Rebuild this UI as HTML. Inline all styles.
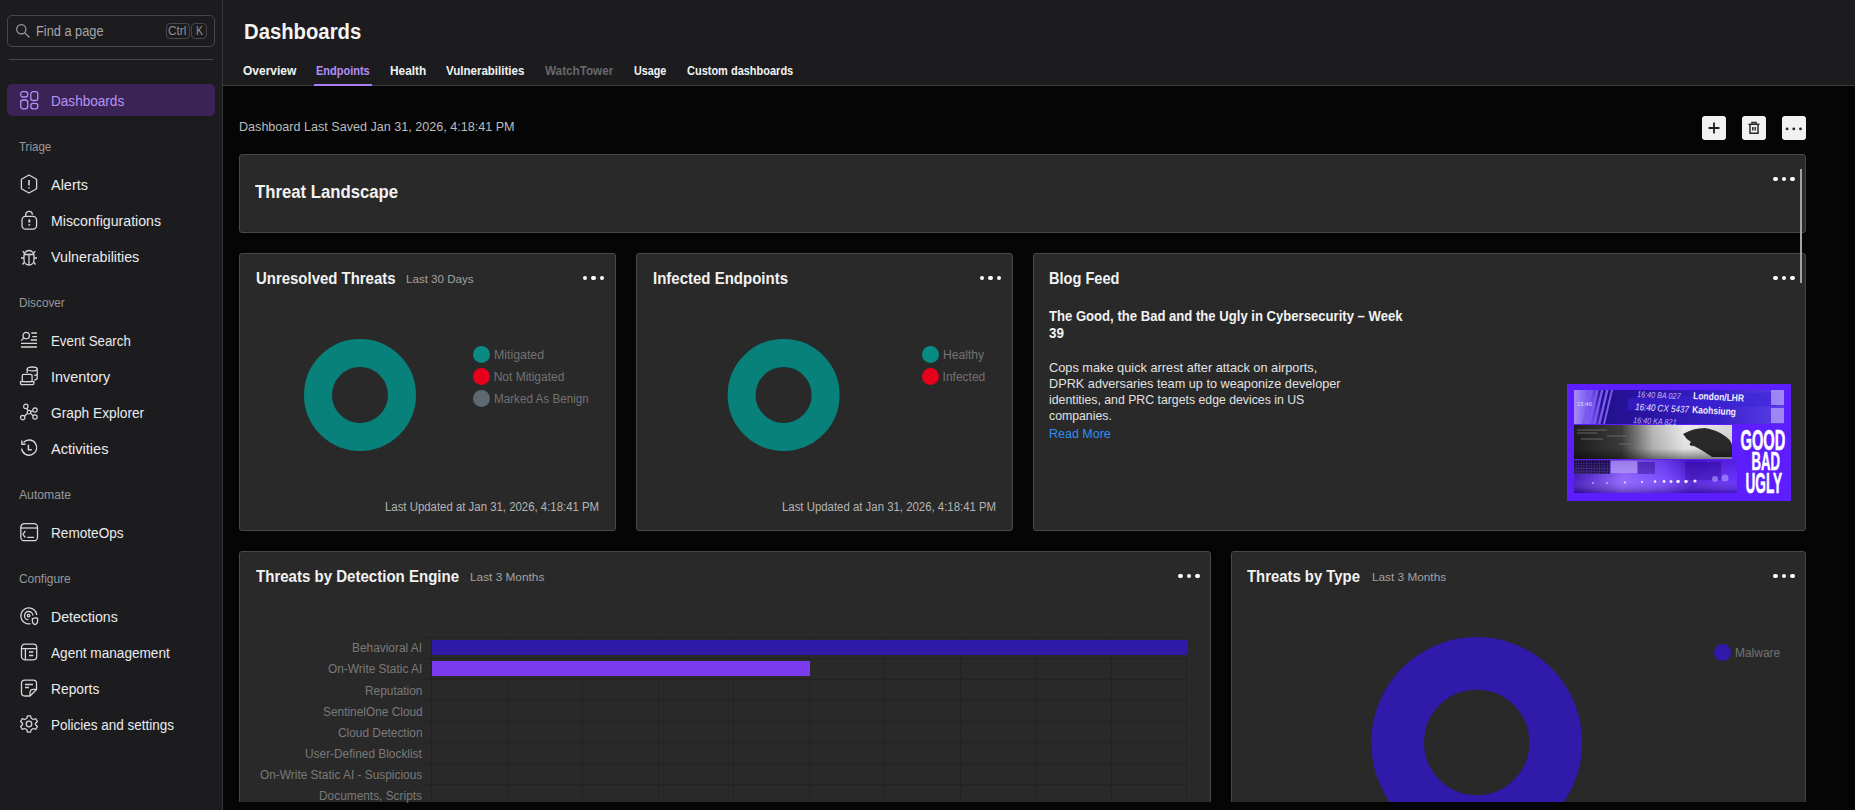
<!DOCTYPE html>
<html><head><meta charset="utf-8">
<style>
*{box-sizing:border-box;margin:0;padding:0}
html,body{width:1855px;height:810px;overflow:hidden;background:#050505;font-family:"Liberation Sans",sans-serif;color:#eee}
.abs{position:absolute}
#side{position:absolute;left:0;top:0;width:223px;height:810px;background:#1c1c1f;border-right:1px solid #363639}
#hdr{position:absolute;left:223px;top:0;width:1632px;height:86px;background:#1c1c1f;border-bottom:1px solid #3c3c3f}
.t{position:absolute;white-space:pre;line-height:1;transform-origin:0 0}
.card{position:absolute;background:#292929;border:1px solid #484848;border-radius:3px;overflow:hidden}
.dots{position:absolute;width:22px;height:5px}
.dots i{position:absolute;top:0;width:4.3px;height:4.3px;border-radius:50%;background:#fff}
.dots i:nth-child(1){left:0}.dots i:nth-child(2){left:8.45px}.dots i:nth-child(3){left:16.9px}
.ico{position:absolute;left:19px;width:20px;height:20px}
.ldot{position:absolute;width:17px;height:17px;border-radius:50%}
.btn{position:absolute;top:116px;width:24px;height:24px;background:#f1f1f1;border-radius:3px}
</style></head><body>
<div id="side">
  <div class="abs" style="left:7px;top:15px;width:208px;height:32px;border:1px solid #47474a;border-radius:5px"></div>
  <svg class="abs" style="left:14px;top:22px" width="20" height="20" viewBox="0 0 20 20"><circle cx="7.3" cy="7.3" r="4.6" fill="none" stroke="#a2a1a6" stroke-width="1.2"/><path d="M10.6 10.6 L15 15" stroke="#a2a1a6" stroke-width="1.2" stroke-linecap="round"/></svg>
  <div class="abs" style="left:166px;top:23px;width:24px;height:16px;border:1px solid #48474b;border-radius:4px"></div>
  <div class="abs" style="left:191px;top:23px;width:16px;height:16px;border:1px solid #48474b;border-radius:4px"></div>
  <div class="abs" style="left:9px;top:59px;width:204px;height:1px;background:#48484b"></div>

  <div class="abs" style="left:7px;top:84px;width:208px;height:32px;background:#3a2456;border-radius:5px"></div>
  <svg class="abs" style="left:19px;top:90px" width="20" height="20" viewBox="0 0 20 20" fill="none" stroke="#b48ff7" stroke-width="1.3"><rect x="1.7" y="1.7" width="7" height="5.3" rx="2.2"/><rect x="11.8" y="1.7" width="7" height="8.8" rx="2.2"/><rect x="1.7" y="10" width="7" height="8.8" rx="2.2"/><rect x="11.8" y="13.4" width="7" height="5.4" rx="2.2"/></svg>
  <svg class="ico" style="top:174px" viewBox="0 0 20 20" fill="none" stroke="#d6d6d8" stroke-width="1.3"><path d="M10 1 L17.6 5.3 V14.7 L10 19 L2.4 14.7 V5.3 Z" stroke-linejoin="round"/><path d="M10 6 V11.4 M10 13.3 V14.6" stroke-width="1.6"/></svg>

  <svg class="ico" style="top:210px" viewBox="0 0 20 20" fill="none" stroke="#d6d6d8" stroke-width="1.3"><rect x="3" y="6.4" width="14.6" height="12.8" rx="3.6"/><path d="M6.7 6.4 V4.8 A3.4 3.4 0 0 1 13.4 4 L13.6 4.6"/><path d="M10.3 9.4 V12.6" stroke-width="1.9"/><path d="M10.3 14.2 V15.6" stroke-width="1.9"/></svg>

  <svg class="ico" style="top:247px" viewBox="0 0 20 20" fill="none" stroke="#d6d6d8" stroke-width="1.3"><path d="M10 3.5 C6.4 3.5 5 6.5 5 9 V13 C5 16 7.2 18 10 18 C12.8 18 15 16 15 13 V9 C15 6.5 13.6 3.5 10 3.5 Z"/><path d="M5.2 7.5 H14.8 M10 7.5 V17.6"/><path d="M2 11 H5 M15 11 H18 M3.8 4 L5.6 6.6 M16.2 4 L14.4 6.6 M3.5 17.5 L5.6 15 M16.5 17.5 L14.4 15"/></svg>
  <svg class="ico" style="top:330px" viewBox="0 0 20 20" fill="none" stroke="#d6d6d8" stroke-width="1.3"><circle cx="7.2" cy="5.6" r="3.2"/><path d="M4.9 7.9 L2.2 10.6"/><path d="M12.3 3 H18 M13.3 6.6 H18 M11.8 10 H18 M2 13.4 H18 M2 17 H18" stroke-width="1.4"/></svg>

  <svg class="ico" style="top:366px" viewBox="0 0 20 20" fill="none" stroke="#d6d6d8" stroke-width="1.3"><ellipse cx="13.2" cy="2.9" rx="5" ry="1.9"/><path d="M8.2 2.9 V7 M18.2 2.9 V12 C18.2 13 16.8 13.8 15.2 14.1 M18.2 7.4 C18.2 8.4 17 9.2 15.2 9.5"/><rect x="3.3" y="8.3" width="9.8" height="7.3" rx="1.3"/><path d="M1.5 15.6 H14.9 V17.2 Q14.9 18.6 13.5 18.6 H2.9 Q1.5 18.6 1.5 17.2 Z"/></svg>

  <svg class="ico" style="top:402px" viewBox="0 0 20 20" fill="none" stroke="#d6d6d8" stroke-width="1.2"><circle cx="10" cy="10.2" r="1.8"/><circle cx="6.8" cy="4.4" r="2.2"/><circle cx="16" cy="8" r="2.2"/><circle cx="3.7" cy="15.6" r="2.2"/><circle cx="16" cy="15" r="2.2"/><path d="M7.9 6.3 L9.1 8.6 M11.7 9.6 L13.9 8.7 M8.5 11.3 L5.4 14.3 M11.6 11.1 L14.1 13.8"/></svg>

  <svg class="ico" style="top:438px" viewBox="0 0 20 20" fill="none" stroke="#d6d6d8" stroke-width="1.4"><path d="M4.5 4.5 A7.6 7.6 0 1 1 2.6 10.6"/><path d="M2.8 2.5 L2.8 6.2 L6.5 6.2" stroke-linejoin="round"/><path d="M9.4 6.8 V11.8 H12.8" stroke-width="1.5"/></svg>
  <svg class="ico" style="top:522px" viewBox="0 0 20 20" fill="none" stroke="#d6d6d8" stroke-width="1.3"><rect x="1.8" y="1.7" width="16.7" height="17" rx="3.5"/><path d="M1.8 6 H18.5"/><path d="M6 9.4 L3.9 12.3 L6 15.2 M8.7 15.3 H14.6" stroke-linecap="round"/></svg>
  <svg class="ico" style="top:606px" viewBox="0 0 20 20" fill="none" stroke="#d6d6d8" stroke-width="1.3"><path d="M11.5 17.7 A8 8 0 1 1 17.8 9"/><path d="M9.5 13.9 A4.2 4.2 0 1 1 13.9 9.5"/><circle cx="9.6" cy="9.6" r="1.3"/><path d="M13.6 12.6 L17 11.6 L18.6 12.4 V15 C18.6 17 17 18.3 16 18.6 C15 18.3 13.4 17 13.4 15 V12.6 Z"/></svg>

  <svg class="ico" style="top:642px" viewBox="0 0 20 20" fill="none" stroke="#d6d6d8" stroke-width="1.3"><rect x="2.5" y="2.2" width="15.2" height="15.6" rx="3.2"/><path d="M2.5 6.6 H17.7 M6.4 6.6 V17.8"/><path d="M10 10 H14.3 M10 13.6 H14.3" stroke-width="1.5"/></svg>

  <svg class="ico" style="top:678px" viewBox="0 0 20 20" fill="none" stroke="#d6d6d8" stroke-width="1.3"><path d="M17.5 11.4 V5.4 Q17.5 2.2 14.3 2.2 H5.7 Q2.5 2.2 2.5 5.4 V14.8 Q2.5 18 5.7 18 H11 Z"/><path d="M11 18 V14.6 Q11 11.4 14.2 11.4 H17.5"/><path d="M6 6.6 H14 M6 9.6 H10" stroke-width="1.5"/></svg>

  <svg class="ico" style="top:714px" viewBox="0 0 20 20" fill="none" stroke="#d6d6d8" stroke-width="1.3"><path d="M8.4 1.8 H11.6 L12.2 4.3 L14.3 5.5 L16.8 4.7 L18.4 7.5 L16.5 9.3 V10.7 L18.4 12.5 L16.8 15.3 L14.3 14.5 L12.2 15.7 L11.6 18.2 H8.4 L7.8 15.7 L5.7 14.5 L3.2 15.3 L1.6 12.5 L3.5 10.7 V9.3 L1.6 7.5 L3.2 4.7 L5.7 5.5 L7.8 4.3 Z" stroke-linejoin="round"/><circle cx="10" cy="10" r="2.8"/></svg>
</div>
<div id="hdr"></div>
<div class="abs" style="left:314px;top:84px;width:58px;height:2px;background:#a97ef5"></div>

<div class="btn" style="left:1702px"><svg width="24" height="24" viewBox="0 0 24 24"><path d="M12 6.5 V17.5 M6.5 12 H17.5" stroke="#1e1e1e" stroke-width="1.8"/></svg></div>
<div class="btn" style="left:1742px"><svg width="24" height="24" viewBox="0 0 24 24" fill="none" stroke="#2a2a2a" stroke-width="1.5"><path d="M6.5 8.3 H17.5"/><path d="M10 8.3 V6.6 H14 V8.3"/><path d="M8 8.3 V17.2 H16 V8.3"/><path d="M10.8 11 V14.6 M13.2 11 V14.6"/></svg></div>
<div class="btn" style="left:1782px"><svg width="24" height="24" viewBox="0 0 24 24" fill="#2a2a2a"><circle cx="5.1" cy="12.9" r="1.45"/><circle cx="11.8" cy="12.9" r="1.45"/><circle cx="18.5" cy="12.9" r="1.45"/></svg></div>

<!-- cards -->
<div class="card" style="left:239px;top:154px;width:1567px;height:79px"></div>
<div class="dots" style="left:1773.4px;top:177.2px"><i></i><i></i><i></i></div>

<div class="card" style="left:239px;top:253px;width:377px;height:278px"></div>
<div class="dots" style="left:582.9px;top:276.1px"><i></i><i></i><i></i></div>
<svg class="abs" style="left:239px;top:253px" width="377" height="278"><circle cx="121" cy="142" r="42" fill="none" stroke="#08817a" stroke-width="28"/></svg>
<div class="ldot" style="left:472.8px;top:346.2px;background:#098a83"></div>
<div class="ldot" style="left:472.8px;top:368.2px;background:#e6001c"></div>
<div class="ldot" style="left:472.8px;top:390.3px;background:#5d6871"></div>

<div class="card" style="left:636px;top:253px;width:377px;height:278px"></div>
<div class="dots" style="left:979.9px;top:276.1px"><i></i><i></i><i></i></div>
<svg class="abs" style="left:636px;top:253px" width="377" height="278"><circle cx="147.6" cy="142" r="42" fill="none" stroke="#08817a" stroke-width="28"/></svg>
<div class="ldot" style="left:922.2px;top:346.4px;background:#098a83"></div>
<div class="ldot" style="left:922.2px;top:368.3px;background:#e6001c"></div>

<div class="card" style="left:1033px;top:253px;width:773px;height:278px"></div>
<div class="dots" style="left:1773.4px;top:276.1px"><i></i><i></i><i></i></div>
<svg class="abs" style="left:1567px;top:384px" width="224" height="117" viewBox="0 0 224 117">
<defs>
<linearGradient id="s1" x1="0" x2="1" y1="0" y2="0"><stop offset="0" stop-color="#a58cf8"/><stop offset="0.09" stop-color="#6a4ae8"/><stop offset="0.13" stop-color="#22108a"/><stop offset="0.4" stop-color="#2c14a8"/><stop offset="0.7" stop-color="#3a22c8"/><stop offset="1" stop-color="#5a3ee8"/></linearGradient>
<linearGradient id="s2" x1="0" x2="1" y1="0" y2="0"><stop offset="0" stop-color="#1e1e1e"/><stop offset="0.3" stop-color="#3c3c3c"/><stop offset="0.5" stop-color="#b8b8b8"/><stop offset="0.7" stop-color="#ececec"/><stop offset="1" stop-color="#d8d8d8"/></linearGradient>
<linearGradient id="s2b" x1="0" x2="0" y1="0" y2="1"><stop offset="0" stop-color="#000" stop-opacity="0"/><stop offset="0.7" stop-color="#000" stop-opacity="0.05"/><stop offset="1" stop-color="#000" stop-opacity="0.45"/></linearGradient>
<linearGradient id="s3" x1="0" x2="1" y1="0" y2="0"><stop offset="0" stop-color="#3a0cb8"/><stop offset="0.3" stop-color="#8a5cff"/><stop offset="0.55" stop-color="#7040ff"/><stop offset="0.72" stop-color="#4a14d8"/><stop offset="0.9" stop-color="#5a20f0"/><stop offset="1" stop-color="#5a22f8"/></linearGradient>
<linearGradient id="s3b" x1="0" x2="0" y1="0" y2="1"><stop offset="0" stop-color="#000" stop-opacity="0.1"/><stop offset="0.6" stop-color="#fff" stop-opacity="0.08"/><stop offset="1" stop-color="#10004a" stop-opacity="0.35"/></linearGradient>
<pattern id="gp" width="2.6" height="2.6" patternUnits="userSpaceOnUse"><rect width="2.6" height="2.6" fill="#14063a"/><rect x="0.6" y="0.6" width="1.4" height="1.4" fill="#5a38c8"/></pattern>
</defs>
<rect width="224" height="117" fill="#5c1eff"/>
<rect x="7" y="6" width="210" height="34" fill="url(#s1)"/>
<path d="M23 6 h3 l-8 34 h-3 Z M29 6 h2.5 l-8 34 h-2.5 Z M34 6 h2.5 l-8 34 h-2.5 Z M39 6 h2.5 l-8 34 h-2.5 Z M44 6 h2 l-8 34 h-2 Z" fill="#7a5af0"/>
<path d="M62 14 L210 8 V22 L60 26 Z" fill="#3a22d8" opacity="0.55"/>
<g font-family="Liberation Sans" font-style="italic">
<text transform="translate(70,13) rotate(3) scale(0.85,1)" font-size="8.5" fill="#c8b8ff">16:40 BA 027</text>
<text transform="translate(68,26) rotate(3) scale(0.85,1)" font-size="9.5" fill="#e8e0ff">16:40 CX 5437</text>
<text transform="translate(66,39) rotate(3) scale(0.85,1)" font-size="8.5" fill="#b8a8ff">16:40 KA 821</text>
</g>
<g font-family="Liberation Sans" font-weight="700">
<text transform="translate(126,15) rotate(3) scale(0.85,1)" font-size="10" fill="#f0ecff">London/LHR</text>
<text transform="translate(125,29) rotate(3) scale(0.85,1)" font-size="10" fill="#f0ecff">Kaohsiung</text>
</g>
<text x="10" y="22" font-family="Liberation Sans" font-size="6" fill="#e0d8ff">15:40</text>
<rect x="204" y="6" width="13" height="15" fill="#b09af8" opacity="0.8"/>
<rect x="204" y="24" width="13" height="15" fill="#b09af8" opacity="0.8"/>
<rect x="7" y="41" width="158" height="34" fill="url(#s2)"/>
<path d="M10 46 H40 M10 49 H30 M14 55 H36 M52 60 H70 M40 52 H60" stroke="#777" stroke-width="0.8"/>
<path d="M116 50 Q126 44 138 44 Q150 46 158 52 Q165 57 165 62 V73 H145 Q135 66 127 62 Q120 62 124 58 Q119 55 116 50 Z" fill="#2a2a2a"/>
<rect x="7" y="41" width="158" height="34" fill="url(#s2b)"/>
<rect x="7" y="76" width="163" height="33" fill="url(#s3)"/>
<rect x="7" y="76" width="36" height="14" fill="url(#gp)"/>
<rect x="44" y="77" width="26" height="12" fill="#a888ff"/>
<rect x="71" y="78" width="17" height="12" fill="#3a14a8" opacity="0.6"/>
<rect x="118" y="78" width="36" height="18" fill="#3008a8" opacity="0.55"/>
<rect x="7" y="76" width="163" height="33" fill="url(#s3b)"/>
<g fill="#fff" opacity="0.9"><circle cx="26" cy="99" r="0.8"/><circle cx="40" cy="99" r="0.8"/><circle cx="58" cy="98.5" r="0.9"/><circle cx="75" cy="98" r="1"/><circle cx="88" cy="97.5" r="1.3"/><circle cx="97" cy="97.5" r="1.4"/><circle cx="104" cy="97.5" r="1.5"/><circle cx="111" cy="97.5" r="1.8"/><circle cx="119" cy="97.5" r="1.8"/><circle cx="128" cy="97" r="1.6"/></g>
<g fill="#b8a0ff" opacity="0.6"><circle cx="148" cy="95" r="3"/><circle cx="158" cy="94" r="3.5"/></g>
<g fill="#fff" stroke="#fff" stroke-width="0.6" font-family="Liberation Sans" font-weight="700">
<text transform="translate(173.5,65.7) scale(0.505,1)" font-size="29">GOOD</text>
<text transform="translate(184.5,86.2) scale(0.505,1)" font-size="26">BAD</text>
<text transform="translate(178.5,109.2) scale(0.47,1)" font-size="29">UGLY</text>
</g>
</svg>

<div class="card" style="left:239px;top:551px;width:972px;height:300px"></div>
<div class="dots" style="left:1178.4px;top:574.1px"><i></i><i></i><i></i></div>
<svg class="abs" style="left:0;top:0" width="1855" height="802" shape-rendering="crispEdges">
<rect x="424" y="637" width="764" height="1" fill="#232323"/>
<rect x="424" y="658" width="764" height="1" fill="#232323"/>
<rect x="424" y="679" width="764" height="1" fill="#232323"/>
<rect x="424" y="700" width="764" height="1" fill="#232323"/>
<rect x="424" y="721" width="764" height="1" fill="#232323"/>
<rect x="424" y="742" width="764" height="1" fill="#232323"/>
<rect x="424" y="763" width="764" height="1" fill="#232323"/>
<rect x="424" y="784" width="764" height="1" fill="#232323"/>
<rect x="431" y="637" width="1" height="165" fill="#232323"/>
<rect x="507" y="637" width="1" height="165" fill="#232323"/>
<rect x="582" y="637" width="1" height="165" fill="#232323"/>
<rect x="658" y="637" width="1" height="165" fill="#232323"/>
<rect x="733" y="637" width="1" height="165" fill="#232323"/>
<rect x="809" y="637" width="1" height="165" fill="#232323"/>
<rect x="884" y="637" width="1" height="165" fill="#232323"/>
<rect x="960" y="637" width="1" height="165" fill="#232323"/>
<rect x="1035" y="637" width="1" height="165" fill="#232323"/>
<rect x="1111" y="637" width="1" height="165" fill="#232323"/>
<rect x="1186" y="637" width="1" height="165" fill="#232323"/>
<rect x="432" y="640" width="756" height="15" fill="#2f1aa8"/>
<rect x="432" y="661" width="378" height="15" fill="#7a3cee"/>
</svg>

<div class="card" style="left:1231px;top:551px;width:575px;height:300px"></div>
<div class="dots" style="left:1773.4px;top:574.1px"><i></i><i></i><i></i></div>
<svg class="abs" style="left:1231px;top:551px" width="575" height="260"><circle cx="245.7" cy="191.5" r="79.1" fill="none" stroke="#301aa9" stroke-width="52.8"/></svg>
<div class="ldot" style="left:1714.1px;top:644.4px;background:#311aaa"></div>

<div class="abs" style="left:223px;top:802px;width:1632px;height:8px;background:#050505"></div>
<div class="t" style="left:35.80px;top:24.05px;font-size:14px;font-weight:400;color:#a6a5aa;transform:scaleX(0.9127)">Find a page</div>
<div class="t" style="left:168.30px;top:24.93px;font-size:12.6px;font-weight:400;color:#8f8e93;transform:scaleX(0.9391)">Ctrl</div>
<div class="t" style="left:195.90px;top:24.93px;font-size:12.6px;font-weight:400;color:#8f8e93;transform:scaleX(0.8446)">K</div>
<div class="t" style="left:51.40px;top:94.15px;font-size:14px;font-weight:400;color:#b993f5;transform:scaleX(0.9695)">Dashboards</div>
<div class="t" style="left:19.20px;top:140.50px;font-size:12.4px;font-weight:400;color:#98979c;transform:scaleX(0.9287)">Triage</div>
<div class="t" style="left:19.20px;top:296.50px;font-size:12.4px;font-weight:400;color:#98979c;transform:scaleX(0.9501)">Discover</div>
<div class="t" style="left:19.20px;top:488.50px;font-size:12.4px;font-weight:400;color:#98979c;transform:scaleX(0.9822)">Automate</div>
<div class="t" style="left:19.20px;top:572.50px;font-size:12.4px;font-weight:400;color:#98979c;transform:scaleX(0.9621)">Configure</div>
<div class="t" style="left:51.20px;top:177.95px;font-size:14px;font-weight:400;color:#ebebed;transform:scaleX(1.0336)">Alerts</div>
<div class="t" style="left:51.20px;top:213.95px;font-size:14px;font-weight:400;color:#ebebed;transform:scaleX(1.0098)">Misconfigurations</div>
<div class="t" style="left:51.20px;top:249.95px;font-size:14px;font-weight:400;color:#ebebed;transform:scaleX(1.0180)">Vulnerabilities</div>
<div class="t" style="left:51.20px;top:333.95px;font-size:14px;font-weight:400;color:#ebebed;transform:scaleX(0.9493)">Event Search</div>
<div class="t" style="left:51.20px;top:369.95px;font-size:14px;font-weight:400;color:#ebebed;transform:scaleX(1.0279)">Inventory</div>
<div class="t" style="left:51.20px;top:405.95px;font-size:14px;font-weight:400;color:#ebebed;transform:scaleX(0.9817)">Graph Explorer</div>
<div class="t" style="left:51.20px;top:441.95px;font-size:14px;font-weight:400;color:#ebebed;transform:scaleX(1.0410)">Activities</div>
<div class="t" style="left:51.20px;top:525.95px;font-size:14px;font-weight:400;color:#ebebed;transform:scaleX(0.9718)">RemoteOps</div>
<div class="t" style="left:51.20px;top:609.95px;font-size:14px;font-weight:400;color:#ebebed;transform:scaleX(1.0097)">Detections</div>
<div class="t" style="left:51.20px;top:645.95px;font-size:14px;font-weight:400;color:#ebebed;transform:scaleX(0.9722)">Agent management</div>
<div class="t" style="left:51.20px;top:681.95px;font-size:14px;font-weight:400;color:#ebebed;transform:scaleX(0.9851)">Reports</div>
<div class="t" style="left:51.20px;top:717.95px;font-size:14px;font-weight:400;color:#ebebed;transform:scaleX(0.9636)">Policies and settings</div>
<div class="t" style="left:243.70px;top:19.90px;font-size:22.8px;font-weight:700;color:#f4f4f4;transform:scaleX(0.8896)">Dashboards</div>
<div class="t" style="left:242.60px;top:65.09px;font-size:12.3px;font-weight:700;color:#f2f2f2;transform:scaleX(0.9762)">Overview</div>
<div class="t" style="left:315.70px;top:65.09px;font-size:12.3px;font-weight:700;color:#b48cf7;transform:scaleX(0.8931)">Endpoints</div>
<div class="t" style="left:389.80px;top:65.09px;font-size:12.3px;font-weight:700;color:#f2f2f2;transform:scaleX(0.9629)">Health</div>
<div class="t" style="left:446.40px;top:65.09px;font-size:12.3px;font-weight:700;color:#f2f2f2;transform:scaleX(0.9365)">Vulnerabilities</div>
<div class="t" style="left:545.00px;top:65.09px;font-size:12.3px;font-weight:700;color:#68686b;transform:scaleX(0.9521)">WatchTower</div>
<div class="t" style="left:634.00px;top:65.09px;font-size:12.3px;font-weight:700;color:#f2f2f2;transform:scaleX(0.8748)">Usage</div>
<div class="t" style="left:686.50px;top:65.09px;font-size:12.3px;font-weight:700;color:#f2f2f2;transform:scaleX(0.8933)">Custom dashboards</div>
<div class="t" style="left:239.40px;top:121.08px;font-size:12.9px;font-weight:400;color:#bcbcbc;transform:scaleX(0.9761)">Dashboard Last Saved Jan 31, 2026, 4:18:41 PM</div>
<div class="t" style="left:255.30px;top:183.21px;font-size:18.3px;font-weight:700;color:#f2f2f2;transform:scaleX(0.9147)">Threat Landscape</div>
<div class="t" style="left:255.60px;top:270.09px;font-size:16.2px;font-weight:700;color:#f2f2f2;transform:scaleX(0.9230)">Unresolved Threats</div>
<div class="t" style="left:405.60px;top:273.81px;font-size:11.8px;font-weight:400;color:#a3a3a3;transform:scaleX(0.9817)">Last 30 Days</div>
<div class="t" style="left:652.80px;top:269.89px;font-size:16.2px;font-weight:700;color:#f2f2f2;transform:scaleX(0.9266)">Infected Endpoints</div>
<div class="t" style="left:1049.00px;top:270.29px;font-size:16.2px;font-weight:700;color:#f2f2f2;transform:scaleX(0.9010)">Blog Feed</div>
<div class="t" style="left:493.70px;top:348.64px;font-size:12px;font-weight:400;color:#727272;transform:scaleX(1.0287)">Mitigated</div>
<div class="t" style="left:493.70px;top:370.64px;font-size:12px;font-weight:400;color:#727272;transform:scaleX(1.0000)">Not Mitigated</div>
<div class="t" style="left:493.70px;top:392.74px;font-size:12px;font-weight:400;color:#727272;transform:scaleX(0.9734)">Marked As Benign</div>
<div class="t" style="left:385.40px;top:501.44px;font-size:12px;font-weight:400;color:#b5b5b5;transform:scaleX(0.9494)">Last Updated at Jan 31, 2026, 4:18:41 PM</div>
<div class="t" style="left:942.60px;top:348.64px;font-size:12px;font-weight:400;color:#727272;transform:scaleX(1.0101)">Healthy</div>
<div class="t" style="left:942.60px;top:370.64px;font-size:12px;font-weight:400;color:#727272;transform:scaleX(1.0000)">Infected</div>
<div class="t" style="left:782.20px;top:501.44px;font-size:12px;font-weight:400;color:#b5b5b5;transform:scaleX(0.9494)">Last Updated at Jan 31, 2026, 4:18:41 PM</div>
<div class="t" style="left:1049.20px;top:309.00px;font-size:14.3px;font-weight:700;color:#f2f2f2;transform:scaleX(0.9162)">The Good, the Bad and the Ugly in Cybersecurity – Week</div>
<div class="t" style="left:1049.20px;top:325.80px;font-size:14.3px;font-weight:700;color:#f2f2f2;transform:scaleX(0.9360)">39</div>
<div class="t" style="left:1049.20px;top:362.23px;font-size:12.6px;font-weight:400;color:#e2e2e2;transform:scaleX(1.0136)">Cops make quick arrest after attack on airports,</div>
<div class="t" style="left:1049.20px;top:378.23px;font-size:12.6px;font-weight:400;color:#e2e2e2;transform:scaleX(1.0086)">DPRK adversaries team up to weaponize developer</div>
<div class="t" style="left:1049.20px;top:394.13px;font-size:12.6px;font-weight:400;color:#e2e2e2;transform:scaleX(0.9750)">identities, and PRC targets edge devices in US</div>
<div class="t" style="left:1049.20px;top:410.03px;font-size:12.6px;font-weight:400;color:#e2e2e2;transform:scaleX(0.9750)">companies.</div>
<div class="t" style="left:1049.20px;top:427.93px;font-size:12.6px;font-weight:400;color:#2e8ff0;transform:scaleX(0.9918)">Read More</div>
<div class="t" style="left:255.80px;top:568.39px;font-size:16.2px;font-weight:700;color:#f2f2f2;transform:scaleX(0.9292)">Threats by Detection Engine</div>
<div class="t" style="left:469.80px;top:572.11px;font-size:11.8px;font-weight:400;color:#a3a3a3;transform:scaleX(1.0026)">Last 3 Months</div>
<div class="t" style="left:1247.40px;top:568.19px;font-size:16.2px;font-weight:700;color:#f2f2f2;transform:scaleX(0.9190)">Threats by Type</div>
<div class="t" style="left:1371.70px;top:571.91px;font-size:11.8px;font-weight:400;color:#a3a3a3;transform:scaleX(0.9999)">Last 3 Months</div>
<div class="t" style="left:352.29px;top:642.44px;font-size:12px;font-weight:400;color:#7a7a7a;transform:scaleX(0.9900)">Behavioral AI</div>
<div class="t" style="left:328.11px;top:663.49px;font-size:12px;font-weight:400;color:#7a7a7a;transform:scaleX(0.9900)">On-Write Static AI</div>
<div class="t" style="left:364.83px;top:684.54px;font-size:12px;font-weight:400;color:#7a7a7a;transform:scaleX(0.9900)">Reputation</div>
<div class="t" style="left:322.57px;top:705.59px;font-size:12px;font-weight:400;color:#7a7a7a;transform:scaleX(0.9900)">SentinelOne Cloud</div>
<div class="t" style="left:337.76px;top:726.64px;font-size:12px;font-weight:400;color:#7a7a7a;transform:scaleX(0.9900)">Cloud Detection</div>
<div class="t" style="left:305.43px;top:747.69px;font-size:12px;font-weight:400;color:#7a7a7a;transform:scaleX(0.9900)">User-Defined Blocklist</div>
<div class="t" style="left:260.09px;top:768.74px;font-size:12px;font-weight:400;color:#7a7a7a;transform:scaleX(0.9900)">On-Write Static AI - Suspicious</div>
<div class="t" style="left:319.29px;top:789.79px;font-size:12px;font-weight:400;color:#7a7a7a;transform:scaleX(0.9900)">Documents, Scripts</div>
<div class="t" style="left:1734.50px;top:646.74px;font-size:12px;font-weight:400;color:#727272;transform:scaleX(0.9965)">Malware</div>
<div class="abs" style="left:1800px;top:169px;width:2px;height:114px;background:#a4a4a4"></div>

</body></html>
